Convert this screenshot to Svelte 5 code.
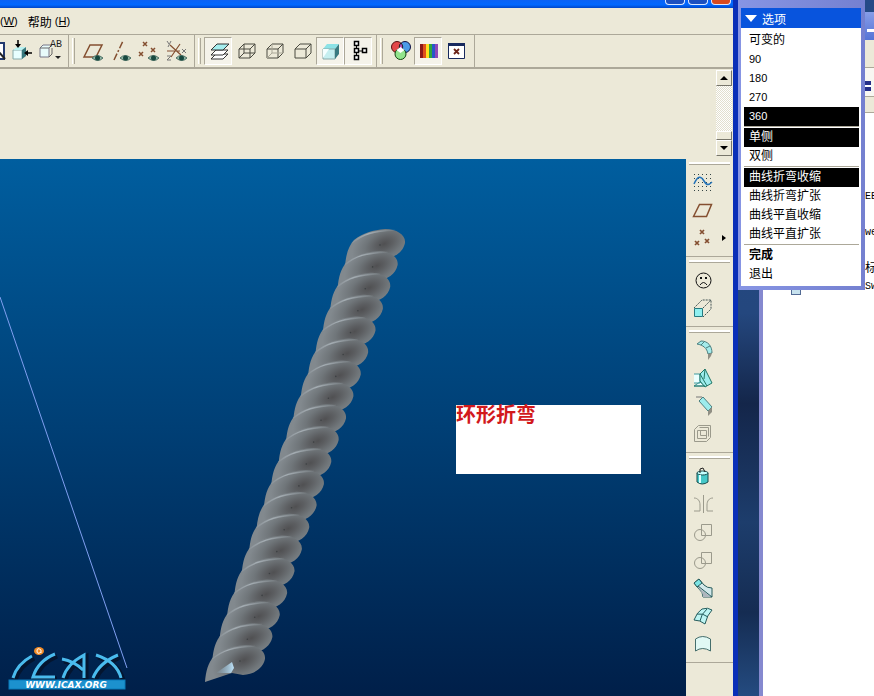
<script lang="ts">
	interface Tool {
		icon: string;
		label: string;
		active?: boolean;
		flyout?: boolean;
	}

	const EYE =
		'<path d="M12 19q5-5 11 0q-5 5-11 0z" fill="#8fb5a5" stroke="#4c7064"/><circle cx="17.500" cy="19" r="2.500" fill="#174940"/>';
	const BOX = '<path d="M5 10h11v9H5zM5 10l5-5h11l-5 5M21 5v9l-5 5" fill="none" stroke="#4a4a40"/>';

	const ICONS: Record<string, string> = {
		page: '<path d="M14 4h8v16h-8" fill="#fff" stroke="#223a70" stroke-width="2"/><path d="M17 13l6 7" stroke="#222" stroke-width="2"/>',
		place:
			'<path d="M3 11h9v9H3z" fill="#e8ffff" stroke="#8aa"/><path d="M3 11l4-3h9l-4 3z" fill="#b8f2f2"/><path d="M12 11l4-3v9l-4 3z" fill="#36777c"/><path d="M8 1v5M22 14h-5" stroke="#000" stroke-width="1.500"/><path d="M5 5h6l-3 4zM18 11v6l-4-3z" fill="#000"/>',
		rename:
			'<path d="M2 9l3-3h9l-3 3v9H2z" fill="#e8fbfb" stroke="#778"/><path d="M2 9h9M11 18l3-3V9" stroke="#666" fill="none"/><text x="12" y="8" font-family="Liberation Mono, monospace" font-size="10" fill="#222">AB</text><path d="M17 17h6l-3 3z" fill="#222"/>',
		planeEye: '<path d="M4 18L10 6h12l-6 12z" fill="none" stroke="#844f30" stroke-width="1.500"/>' + EYE,
		axisEye: '<path d="M6 21L15 2" stroke="#844f30" stroke-width="1.500" stroke-dasharray="7 2 2 2"/>' + EYE,
		pointEye:
			'<path d="M7 3l4 4m0-4l-4 4M15 9l4 4m0-4l-4 4M3 13l4 4m0-4l-4 4" stroke="#844f30" stroke-width="1.500"/>' + EYE,
		csysEye:
			'<path d="M6 6l11 10M16 5L7 18M3 12h13" stroke="#844f30" stroke-width="1.200"/><path d="M3 2l2 3m2-3l-3 6M18 10l4 4m0-4l-4 4M3 17h4l-4 4h4" stroke="#777" fill="none"/>' +
			EYE,
		layers:
			'<g stroke="#333" stroke-width="1"><path d="M5 20l5-5h12l-5 5z" fill="#fff"/><path d="M5 16l5-5h12l-5 5z" fill="#fff"/><path d="M5 11l6-6h12l-6 6z" fill="#a5eeee"/></g>',
		wireframe: BOX + '<path d="M10 5v9h11M10 14l-5 5" fill="none" stroke="#4a4a40"/>',
		hidden: BOX + '<path d="M10 5v9h11M10 14l-5 5" fill="none" stroke="#aaa898"/>',
		noHidden: BOX,
		shaded:
			'<path d="M5 10l4-5h12l-4 5z" fill="#8ce2e6"/><path d="M5 10h12v10H5z" fill="#c5eff0" stroke="#8aa"/><path d="M5 10h6l-6 9z" fill="#f4ffff"/><path d="M17 10l4-5v10l-4 5z" fill="#397a80"/>',
		tree: '<path d="M10.500 6v11M12 12h6" stroke="#000"/><path d="M8.500 2.500h4v4h-4zM8.500 9.500h4v4h-4zM8.500 16.500h4v4h-4zM16.500 9.500h4v4h-4z" fill="#fff" stroke="#000" stroke-width="1.500"/>',
		colors:
			'<circle cx="9" cy="8" r="5.500" fill="#e34848" stroke="#511"/><circle cx="17" cy="8" r="5.500" fill="#4c9be8" stroke="#114"/><circle cx="12.500" cy="15" r="5.500" fill="#92e48c" stroke="#141"/><path d="M13 4a5.500 5.500 0 0 1 0 8a5.500 5.500 0 0 1 0-8z" fill="#b54ab5" stroke="#222"/><path d="M12.500 8l4 3-4 3-4-3z" fill="#fff"/>',
		spectrum:
			'<path d="M4 5h3v14H4z" fill="#8b1818"/><path d="M7 5h3v14H7z" fill="#e0501c"/><path d="M10 5h3v14h-3z" fill="#ffdf20"/><path d="M13 5h3v14h-3z" fill="#2fa63c"/><path d="M16 5h3v14h-3z" fill="#2858c8"/><path d="M19 5h3v14h-3z" fill="#8f48b8"/>',
		closeWindow:
			'<path d="M4.500 4.500h16v15h-16z" fill="#fff" stroke="#17295e"/><path d="M4 4h17v3H4z" fill="#17295e"/><path d="M10 10l5 5m0-5l-5 5" stroke="#6b2418" stroke-width="1.800"/>',
		sketch:
			'<path d="M3 4.500h19M3 8.500h19M3 12.500h19M3 16.500h19M3 20.500h19" stroke="#344" stroke-dasharray="1 3"/><path d="M3 14c4-9 7-8 10-3s5 4 8 1" fill="none" stroke="#2573b8" stroke-width="1.500"/>',
		plane: '<path d="M2.500 18.500l6-12h12l-5 12z" fill="none" stroke="#844f30" stroke-width="1.500"/>',
		points:
			'<path d="M9 4l4 4m0-4l-4 4M14 13l4 4m0-4l-4 4M4 15l4 4m0-4l-4 4" stroke="#844f30" stroke-width="1.700"/>',
		face: '<circle cx="12.500" cy="12.500" r="7.500" fill="none" stroke="#111"/><path d="M9 17q3.500-5 7 0" fill="none" stroke="#111"/><path d="M9 9h2v2H9zM14 9h2v2h-2z" fill="#111"/>',
		extrude:
			'<path d="M3 12l8-8h9v9l-8 8M12 12l8-8" fill="none" stroke="#455" stroke-dasharray="2 1"/><path d="M3.500 12.500h8v8h-8z" fill="#8ff0f0" stroke="#267a80"/>',
		round:
			'<path d="M6 6l4-3c7 0 11 5 11 12l-4 1C16 10 12 7 6 6z" fill="#a4ecec" stroke="#4c8080"/><path d="M13 4l-3 3M19 8l-4 2" stroke="#4c8080"/><path d="M17 16l4-1-1 3-3 4z" fill="#908f84"/>',
		rib: '<path d="M3 20l6-4 5 4zM3 8h6v9H3" fill="#eaffff" stroke="#3e999c"/><path d="M9 8l5-5 7 14-7 4-5-6z" fill="#9cecec" stroke="#276"/><path d="M9 8l7 12M14 3l-1 10" stroke="#276"/><path d="M3 20h11" stroke="#276"/>',
		chamfer:
			'<path d="M8 7l4-4 9 10-4 4z" fill="#9cecec" stroke="#4c8080"/><path d="M5 3h6" stroke="#777"/><path d="M17 17l4-4v5l-4 4z" fill="#908f84"/>',
		shell:
			'<path d="M3.500 19.500v-12l4-4h12v12l-4 4zM6.500 8.500h9v8h-9zM8.500 5.500h9v9M9.500 8.500v5h6" fill="none" stroke="#9b9a8c"/>',
		pattern:
			'<path d="M6 9v9q5 4 11 0V9z" fill="#45c8c8" stroke="#174c4c"/><ellipse cx="11.500" cy="9" rx="5.500" ry="2" fill="#c3ffff" stroke="#174c4c"/><path d="M9 11v8" stroke="#d8ffff" stroke-width="2"/><path d="M9 9V5l3-1 2 4" fill="none" stroke="#222"/>',
		mirror: '<path d="M12.500 3v18M3 6c4 0 6 3 6 7v6H3M22 6c-4 0-6 3-6 7v6h6" fill="none" stroke="#9b9a8c"/>',
		merge: '<path d="M10.500 4.500h10v11h-10z" fill="none" stroke="#9b9a8c"/><circle cx="9" cy="15" r="5.500" fill="none" stroke="#9b9a8c"/>',
		blend:
			'<path d="M3 7l5-4 5 6q3 3 8 3v9h-9q0-5-4-8z" fill="#d2e8ea" stroke="#275b5b"/><path d="M3 7l5-4 3 4-5 4z" fill="#7ce4e4" stroke="#275b5b"/><path d="M7 11l13 10h-8q0-5-4-8z" fill="#aeb6bd"/><path d="M7 10l14 11" stroke="#275b5b"/>',
		boundary:
			'<path d="M3 16q3-8 8-11q6-2 10 1q-5 5-7 14q-5-4-11-4z" fill="#bdf5f3" stroke="#245c5c"/><path d="M6 10q6-1 11 3M9 17q1-7 7-12" fill="none" stroke="#245c5c"/>',
		surface: '<path d="M4.500 19V7q7-5 15 0v12q-8-5-15 0z" fill="#e0f8f4" stroke="#456e6c"/>'
	};

	const bands: Tool[][] = [
		[
			{ icon: 'page', label: '页面' },
			{ icon: 'place', label: '放置' },
			{ icon: 'rename', label: '名称' }
		],
		[
			{ icon: 'planeEye', label: '显示基准平面' },
			{ icon: 'axisEye', label: '显示基准轴' },
			{ icon: 'pointEye', label: '显示基准点' },
			{ icon: 'csysEye', label: '显示坐标系' }
		],
		[
			{ icon: 'layers', label: '层', active: true },
			{ icon: 'wireframe', label: '线框' },
			{ icon: 'hidden', label: '隐藏线' },
			{ icon: 'noHidden', label: '无隐藏线' },
			{ icon: 'shaded', label: '着色', active: true },
			{ icon: 'tree', label: '模型树', active: true }
		],
		[
			{ icon: 'colors', label: '颜色' },
			{ icon: 'spectrum', label: '外观', active: true },
			{ icon: 'closeWindow', label: '关闭窗口' }
		]
	];

	const featureGroups: Tool[][] = [
		[
			{ icon: 'sketch', label: '草绘' },
			{ icon: 'plane', label: '平面' },
			{ icon: 'points', label: '点', flyout: true }
		],
		[
			{ icon: 'face', label: '注释' },
			{ icon: 'extrude', label: '拉伸' }
		],
		[
			{ icon: 'round', label: '倒圆角' },
			{ icon: 'rib', label: '筋' },
			{ icon: 'chamfer', label: '倒角' },
			{ icon: 'shell', label: '壳' }
		],
		[
			{ icon: 'pattern', label: '孔' },
			{ icon: 'mirror', label: '镜像' },
			{ icon: 'merge', label: '合并' },
			{ icon: 'merge', label: '修剪' },
			{ icon: 'blend', label: '混合' },
			{ icon: 'boundary', label: '边界混合' },
			{ icon: 'surface', label: '曲面' }
		]
	];

	let optionGroups = $state([
		{ items: ['可变的', '90', '180', '270', '360'], selected: '360' },
		{ items: ['单侧', '双侧'], selected: '单侧' },
		{ items: ['曲线折弯收缩', '曲线折弯扩张', '曲线平直收缩', '曲线平直扩张'], selected: '曲线折弯收缩' }
	]);

	const LOGO =
		'M5 36Q9 22 24 14M47 12Q30 19 25 35H47M55 36Q59 22 76 13V36M54 17Q66 19 75 28M85 36Q91 21 110 13M88 13Q109 20 113 36';

	// each strand of the rope overlaps the one above it
	const strands = Array.from({ length: 20 }, (_, i) => ({
		x: 375 - i * 7.37,
		y: 84 + i * 21.9
	}));
</script>

{#snippet toolButton(tool: Tool)}
	<button class="tool" class:active={tool.active} aria-label={tool.label}>
		<svg width="24" height="24" viewBox="0 0 24 24">{@html ICONS[tool.icon]}</svg>
	</button>
{/snippet}

<div class="desktop">
	<main class="cad">
		<header class="titlebar">
			<button aria-label="最小化"></button>
			<button aria-label="最大化"></button>
			<button class="close" aria-label="关闭"></button>
		</header>

		<nav class="menubar">
			<button><span class="key">(<u>W</u>)</span></button>
			<button>帮助<span class="key">(<u>H</u>)</span></button>
		</nav>

		<div class="toolbar">
			{#each bands as band}
				<div class="band">
					{#each band as tool}
						{@render toolButton(tool)}
					{/each}
				</div>
			{/each}
		</div>

		<div class="messages">
			<div class="scrollbar">
				<button aria-label="向上滚动"><span class="arrow up"></span></button>
				<div class="track"><div class="thumb"></div></div>
				<button aria-label="向下滚动"><span class="arrow down"></span></button>
			</div>
		</div>

		<div class="work">
			<section class="viewport">
				<svg class="scene" width="686" height="537" viewBox="0 0 686 537">
					<defs>
						<radialGradient
							id="strand"
							gradientUnits="userSpaceOnUse"
							cx="0"
							cy="0"
							r="1"
							gradientTransform="translate(9 1) rotate(-25) scale(34 20)"
						>
							<stop offset="0" stop-color="#505052" />
							<stop offset="0.25" stop-color="#5c5e61" />
							<stop offset="0.6" stop-color="#70767a" />
							<stop offset="1" stop-color="#82898e" />
						</radialGradient>
						<linearGradient id="seam" gradientUnits="userSpaceOnUse" x1="-27" y1="0" x2="22" y2="0">
							<stop offset="0" stop-color="#a9b2b8" stop-opacity="0" />
							<stop offset="0.4" stop-color="#a9b2b8" stop-opacity="0.9" />
							<stop offset="1" stop-color="#a9b2b8" stop-opacity="0" />
						</linearGradient>
						<linearGradient id="tip" x1="0" y1="0" x2="1" y2="0">
							<stop offset="0" stop-color="#9ccbe8" stop-opacity="0" />
							<stop offset="1" stop-color="#bfe4fa" />
						</linearGradient>
					</defs>
					<path d="M0 138L127 509" stroke="#7f9ff0" />
					{#each strands as s}
						<g transform="translate({s.x} {s.y})">
							<path
								d="M-30 23C-29 12-27 4-21-3C-12-10-2-13 10-14C22-14 31-8 30 0C28 9 20 15 8 16L-3 14Z"
								fill="url(#strand)"
							/>
							<path d="M-23 0C-12-9-2-12 20-13" fill="none" stroke="url(#seam)" stroke-width="1.500" />
							<circle cx="5" cy="2" r="0.800" fill="#3d4043" />
						</g>
					{/each}
					<path d="M216 514L232 503L234 509L231 514Z" fill="url(#tip)" />
				</svg>

				<div class="note">环形折弯</div>

				<svg class="logo" width="122" height="48" viewBox="0 0 122 48">
					<path d={LOGO} fill="none" stroke="#04152f" stroke-width="5" transform="translate(2 2)" />
					<path d={LOGO} fill="none" stroke="#4abbed" stroke-width="3" />
					<ellipse cx="31" cy="9" rx="5" ry="4" fill="#f28b25" />
					<path d="M33 10q-4 3-4-1t4-1v3" fill="none" stroke="#fff" />
					<rect x="1" y="38" width="116" height="9" fill="#1c91ce" stroke="#087bb9" />
					<text x="58" y="46" text-anchor="middle">WWW.ICAX.ORG</text>
				</svg>
			</section>

			<aside class="features">
				{#each featureGroups as group}
					<div class="feature-group">
						{#each group as tool}
							<div class="feature">
								{@render toolButton(tool)}
								{#if tool.flyout}
									<button class="flyout" aria-label="更多"><span></span></button>
								{/if}
							</div>
						{/each}
					</div>
				{/each}
			</aside>
		</div>
	</main>

	<section class="browser">
		<div class="browser-title"><span></span></div>
		<div class="browser-menu"></div>
		<div class="browser-tools"><span></span></div>
		<div class="browser-address"></div>
		<div class="browser-page">
			<p>EE</p>
			<p>we</p>
			<p class="cjk">标</p>
			<p>Sw</p>
			<i></i>
		</div>
	</section>

	<section class="options">
		<h2>选项</h2>
		<div class="option-list">
			{#each optionGroups as group}
				<div class="option-group">
					{#each group.items as item}
						<button
							class:selected={group.selected === item}
							class:number={/^\d+$/.test(item)}
							aria-pressed={group.selected === item}
							onclick={() => (group.selected = item)}
						>{item}</button>
					{/each}
				</div>
			{/each}
			<div class="option-group">
				<button class="done">完成</button>
				<button>退出</button>
			</div>
		</div>
	</section>
</div>

<style>
	:global(body) {
		margin: 0;
	}
	.desktop {
		position: relative;
		display: grid;
		grid-template-columns: minmax(0, 1fr) 115px;
		column-gap: 21px;
		min-height: 100vh;
		overflow: hidden;
		background: linear-gradient(#254a86, #24477e 45%, #14264a 58%, #1d3d6c 75%, #152c52 88%, #244b80);
		font-family: 'Liberation Sans', 'Noto Sans CJK SC', sans-serif;
		font-size: 12px;
		color: #000;
	}
	button {
		margin: 0;
		padding: 0;
		border: 0;
		background: none;
		font: inherit;
		color: inherit;
	}

	/* CAD window */
	.cad {
		display: flex;
		flex-direction: column;
		border-right: 5px solid #0a2fb8;
		background: #ece9d8;
	}
	.titlebar {
		display: flex;
		justify-content: flex-end;
		gap: 3px;
		height: 8px;
		padding-right: 2px;
		background: linear-gradient(#0a62f5, #0068ff 60%, #0046c8);
	}
	.titlebar button {
		box-sizing: border-box;
		width: 20px;
		height: 5px;
		border: 1px solid #dce8ff;
		border-top: 0;
		border-radius: 0 0 4px 4px;
		background: #1c50c0;
	}
	.titlebar .close {
		background: #d84a20;
	}
	.menubar {
		display: flex;
		align-items: center;
		gap: 10px;
		height: 26px;
		border-bottom: 1px solid #aca899;
	}
	.menubar button {
		display: flex;
		align-items: center;
		gap: 3px;
	}
	.key {
		font-size: 11px;
	}
	.toolbar {
		display: flex;
		height: 32px;
		border-bottom: 2px solid #aca899;
	}
	.band {
		display: flex;
		align-items: center;
		padding-right: 4px;
		border-right: 1px solid #aca899;
	}
	.band::before {
		content: '';
		width: 1px;
		height: 26px;
		margin: 0 3px;
		border-left: 1px solid #fff;
		border-right: 1px solid #aca899;
	}
	.band:first-child {
		justify-content: flex-end;
		width: 64px;
		overflow: hidden;
	}
	.tool {
		box-sizing: border-box;
		flex: none;
		display: grid;
		place-items: center;
		width: 28px;
		height: 28px;
		border: 1px solid transparent;
	}
	.tool.active {
		border-color: #aca899 #fff #fff #aca899;
		background: #f5f3ea;
	}
	.tool svg {
		display: block;
	}
	.messages {
		display: flex;
		justify-content: flex-end;
		height: 86px;
		padding: 1px 1px 3px;
	}
	.scrollbar {
		display: flex;
		flex-direction: column;
		width: 16px;
	}
	.scrollbar button,
	.thumb {
		box-sizing: border-box;
		display: grid;
		place-items: center;
		height: 16px;
		border: 1px solid;
		border-color: #fff #77756a #77756a #fff;
		background: #ece9d8;
	}
	.track {
		flex: 1;
		display: flex;
		flex-direction: column;
		justify-content: flex-end;
		background: repeating-conic-gradient(#fff 0 25%, #e2dfce 0 50%) 0 0 / 2px 2px;
	}
	.thumb {
		height: 9px;
	}
	.arrow {
		border: 4px solid transparent;
	}
	.arrow.up {
		border-top: 0;
		border-bottom-color: #000;
	}
	.arrow.down {
		border-bottom: 0;
		border-top-color: #000;
	}
	.work {
		flex: 1;
		display: flex;
	}
	.viewport {
		position: relative;
		flex: 1;
		min-width: 0;
		overflow: hidden;
		background: linear-gradient(#005e9f, #003f75 50%, #001f49);
	}
	.scene {
		display: block;
	}
	.note {
		position: absolute;
		left: 456px;
		top: 246px;
		width: 185px;
		height: 69px;
		background: #fff;
		color: #d2191c;
		font-size: 20px;
		font-weight: bold;
		line-height: 20px;
	}
	.logo {
		position: absolute;
		left: 8px;
		bottom: 6px;
	}
	.logo text {
		fill: #fff;
		font: italic bold 9px 'DejaVu Sans', sans-serif;
	}
	.features {
		box-sizing: border-box;
		flex: none;
		width: 47px;
	}
	.feature-group {
		padding: 0 3px 4px;
		border-bottom: 1px solid #aca899;
	}
	.feature-group::before {
		content: '';
		display: block;
		height: 1px;
		padding-top: 1px;
		margin-bottom: 3px;
		border-top: 3px solid #ece9d8;
		border-bottom: 1px solid #aca899;
		background: #fff;
	}
	.feature {
		display: flex;
		align-items: center;
	}
	.flyout {
		display: grid;
		place-items: center;
		width: 13px;
		height: 28px;
	}
	.flyout span {
		border: 3px solid transparent;
		border-left: 4px solid #000;
		border-right: 0;
	}

	/* window behind the options palette */
	.browser {
		display: flex;
		flex-direction: column;
		margin-top: 12px;
		border-left: 4px solid #8589cf;
		background: #fff;
		overflow: hidden;
	}
	.browser-title {
		display: flex;
		align-items: flex-end;
		justify-content: flex-end;
		height: 20px;
		padding-bottom: 8px;
		background: linear-gradient(#879de8, #5574d6);
	}
	.browser-title span {
		width: 7px;
		height: 3px;
		background: #fff;
	}
	.browser-menu {
		height: 27px;
		background: #ece9d8;
	}
	.browser-tools {
		display: flex;
		align-items: center;
		justify-content: flex-end;
		height: 28px;
		padding-right: 3px;
		border-top: 1px solid #aca899;
		background: #f8f7f2;
	}
	.browser-tools span {
		width: 6px;
		height: 10px;
		margin-top: 8px;
		background: linear-gradient(#25308a 4px, #fff 4px 6px, #25308a 6px);
	}
	.browser-address {
		height: 15px;
		border-top: 1px solid #aca899;
		border-bottom: 1px solid #aca899;
		background: #ece9d8;
	}
	.browser-page {
		display: grid;
		grid-template-rows: 36px 36px 18px 18px;
		padding: 75px 0 0 102px;
		font-family: 'Liberation Mono', 'Noto Sans CJK SC', monospace;
		font-size: 10px;
	}
	.browser-page p {
		margin: 0;
		line-height: 18px;
		white-space: nowrap;
	}
	.browser-page .cjk {
		font-size: 12px;
	}
	.browser-page i {
		width: 10px;
		height: 7px;
		margin: -8px 0 0 -74px;
		border: 1px solid #536b94;
		background: #c7e2ee;
		box-sizing: border-box;
	}

	/* options palette */
	.options {
		position: absolute;
		top: 0;
		right: 9px;
		box-sizing: border-box;
		width: 127px;
		padding: 8px 4px 4px 3px;
		background: linear-gradient(90deg, #8795e4, #7480d0);
	}
	.options h2 {
		display: flex;
		align-items: center;
		gap: 5px;
		height: 20px;
		margin: 0;
		padding-left: 4px;
		background: #0854dd;
		color: #fff;
		font-size: 12px;
		font-weight: normal;
	}
	.options h2::before {
		content: '';
		border: 6px solid transparent;
		border-top: 7px solid #fff;
		border-bottom: 0;
	}
	.option-list {
		padding: 3px 2px 2px 3px;
		background: #fff;
	}
	.option-group + .option-group {
		border-top: 1px solid #aca899;
		padding-top: 1px;
	}
	.option-group button {
		display: block;
		width: 100%;
		height: 19px;
		padding-left: 5px;
		line-height: 19px;
		text-align: left;
	}
	.option-group .number {
		font-size: 11px;
	}
	.option-group .selected {
		background: #000;
		color: #fff;
	}
	.option-group .done {
		font-weight: bold;
	}
</style>
